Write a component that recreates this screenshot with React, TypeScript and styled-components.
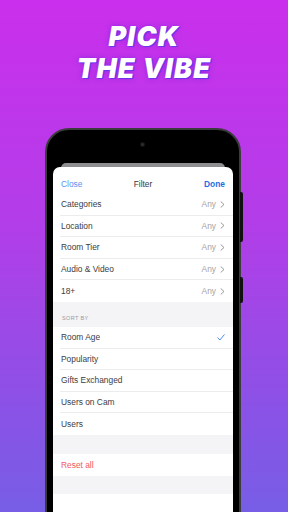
import React from 'react';
import styled, { createGlobalStyle } from 'styled-components';

const GlobalStyle = createGlobalStyle`
  html, body {
    margin: 0;
    padding: 0;
    width: 288px;
    height: 512px;
    overflow: hidden;
  }
  body {
    font-family: "Liberation Sans", Arial, sans-serif;
  }
`;

const Page = styled.div`
  width: 288px;
  height: 512px;
  overflow: hidden;
  background: linear-gradient(180deg, #ca2fec 0%, #b13ee8 45%, #8a52e6 80%, #775ee6 100%);
  display: flex;
  flex-direction: column;
  align-items: center;
`;

const Headline = styled.h1`
  margin: 21px 0 0;
  font-family: "Inter", "Liberation Sans", sans-serif;
  font-weight: 900;
  font-style: italic;
  font-size: 27px;
  line-height: 32px;
  letter-spacing: 1.2px;
  color: #ffffff;
  text-align: center;
  text-shadow: 1px 1px 0 #6d35e8, 0 0 5px rgba(90, 30, 220, 0.55);
`;

const Phone = styled.div`
  position: relative;
  margin-top: 43px;
  margin-left: -2px;
  width: 196px;
  height: 420px;
  flex-shrink: 0;
  box-sizing: border-box;
  border: 2px solid #3b3b3d;
  border-radius: 24px;
  background: #000;
  padding: 0 6px;
`;

const SideButton = styled.div<{ top: number; height: number }>`
  position: absolute;
  right: -4px;
  top: ${p => p.top}px;
  width: 3px;
  height: ${p => p.height}px;
  background: #111;
  border-radius: 0 2px 2px 0;
`;

const Camera = styled.div`
  position: absolute;
  left: 50%;
  top: 13px;
  width: 3px;
  height: 3px;
  margin-left: -2px;
  border-radius: 50%;
  background: #2b2b33;
  box-shadow: 0 0 0 1px #151518;
`;

const Screen = styled.div`
  display: flex;
  flex-direction: column;
  height: 100%;
`;

const StatusArea = styled.div`
  height: 33px;
  flex-shrink: 0;
`;

const BackSheet = styled.div`
  height: 5px;
  margin: 0 8px -1px;
  background: #8e8e91;
  border-radius: 5px 5px 0 0;
  flex-shrink: 0;
`;

const Sheet = styled.div`
  flex: 1;
  background: #ffffff;
  border-radius: 7px 7px 0 0;
  display: flex;
  flex-direction: column;
  overflow: hidden;
`;

const Header = styled.div`
  height: 27px;
  box-sizing: border-box;
  padding: 12px 8px 0 8px;
  display: grid;
  grid-template-columns: 1fr auto 1fr;
  align-items: start;
  font-size: 8.4px;
  line-height: 10px;
`;

const HeaderButton = styled.span<{ bold?: boolean }>`
  color: ${p => (p.bold ? '#1f6fe0' : '#5b8ff0')};
  font-weight: ${p => (p.bold ? 700 : 400)};
  justify-self: ${p => (p.bold ? 'end' : 'start')};
`;

const HeaderTitle = styled.span`
  color: #3a3a3c;
`;

const Group = styled.div`
  display: flex;
  flex-direction: column;
  background: #fff;
`;

const Row = styled.div<{ last?: boolean }>`
  height: 21.6px;
  margin-left: 7px;
  padding-left: 1px;
  padding-right: 8px;
  display: flex;
  align-items: center;
  justify-content: space-between;
  box-sizing: border-box;
  border-bottom: ${p => (p.last ? 'none' : '1px solid #ececef')};
  font-size: 8.4px;
  color: #3c3c3f;
`;

const Label = styled.span<{ danger?: boolean }>`
  color: ${p => (p.danger ? '#f0585e' : '#3c3c3f')};
`;

const Value = styled.span`
  display: flex;
  align-items: center;
  gap: 4px;
  color: #a3a3a8;
`;

const Gap = styled.div<{ h: number }>`
  height: ${p => p.h}px;
  background: #f4f4f6;
  flex-shrink: 0;
`;

const SectionTitle = styled.div`
  height: 25px;
  box-sizing: border-box;
  padding: 13px 0 0 9px;
  background: #f4f4f6;
  font-size: 5.6px;
  letter-spacing: 0.3px;
  color: #9a9a9f;
  text-transform: uppercase;
`;

const Filler = styled.div`
  flex: 1;
  background: #fff;
`;

const Chevron = () => (
  <svg width="5" height="7" viewBox="0 0 5 7" fill="none">
    <path d="M1 0.8 L4 3.5 L1 6.2" stroke="#8e8e93" strokeWidth="0.9" strokeLinecap="round" strokeLinejoin="round" />
  </svg>
);

const Check = () => (
  <svg width="8" height="7" viewBox="0 0 8 7" fill="none">
    <path d="M0.8 3.8 L2.9 6 L7.2 0.8" stroke="#3d7ef0" strokeWidth="0.9" strokeLinecap="round" strokeLinejoin="round" />
  </svg>
);

const filters = ['Categories', 'Location', 'Room Tier', 'Audio & Video', '18+'];
const sorts = ['Room Age', 'Popularity', 'Gifts Exchanged', 'Users on Cam', 'Users'];

export default function App() {
  return (
    <Page>
      <GlobalStyle />
      <Headline>
        PICK
        <br />
        THE VIBE
      </Headline>
      <Phone>
        <Camera />
        <SideButton top={62} height={50} />
        <SideButton top={147} height={26} />
        <Screen>
          <StatusArea />
          <BackSheet />
          <Sheet>
            <Header>
              <HeaderButton>Close</HeaderButton>
              <HeaderTitle>Filter</HeaderTitle>
              <HeaderButton bold>Done</HeaderButton>
            </Header>
            <Group>
              {filters.map((f, i) => (
                <Row key={f} last={i === filters.length - 1}>
                  <Label>{f}</Label>
                  <Value>
                    Any
                    <Chevron />
                  </Value>
                </Row>
              ))}
            </Group>
            <SectionTitle>Sort by</SectionTitle>
            <Group>
              {sorts.map((s, i) => (
                <Row key={s} last={i === sorts.length - 1}>
                  <Label>{s}</Label>
                  {i === 0 && <Check />}
                </Row>
              ))}
            </Group>
            <Gap h={19} />
            <Group>
              <Row last>
                <Label danger>Reset all</Label>
              </Row>
            </Group>
            <Gap h={18} />
            <Filler />
          </Sheet>
        </Screen>
      </Phone>
    </Page>
  );
}
